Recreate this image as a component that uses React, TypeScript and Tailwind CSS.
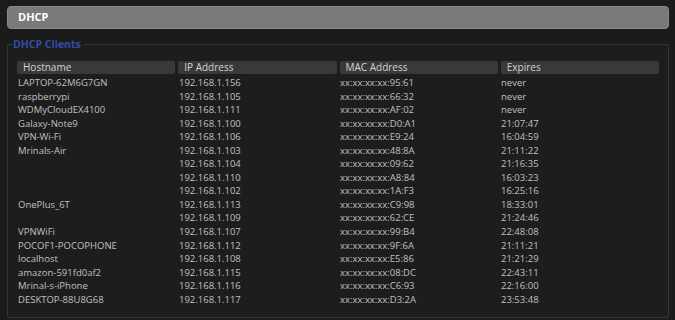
import React from "react"

const clientes = [
    { host: "LAPTOP-62M6G7GN", ip: "192.168.1.156", mac: "xx:xx:xx:xx:95:61", exp: "never" },
    { host: "raspberrypi", ip: "192.168.1.105", mac: "xx:xx:xx:xx:66:32", exp: "never" },
    { host: "WDMyCloudEX4100", ip: "192.168.1.111", mac: "xx:xx:xx:xx:AF:02", exp: "never" },
    { host: "Galaxy-Note9", ip: "192.168.1.100", mac: "xx:xx:xx:xx:D0:A1", exp: "21:07:47" },
    { host: "VPN-Wi-Fi", ip: "192.168.1.106", mac: "xx:xx:xx:xx:E9:24", exp: "16:04:59" },
    { host: "Mrinals-Air", ip: "192.168.1.103", mac: "xx:xx:xx:xx:48:8A", exp: "21:11:22" },
    { host: "", ip: "192.168.1.104", mac: "xx:xx:xx:xx:09:62", exp: "21:16:35" },
    { host: "", ip: "192.168.1.110", mac: "xx:xx:xx:xx:A8:84", exp: "16:03:23" },
    { host: "", ip: "192.168.1.102", mac: "xx:xx:xx:xx:1A:F3", exp: "16:25:16" },
    { host: "OnePlus_6T", ip: "192.168.1.113", mac: "xx:xx:xx:xx:C9:98", exp: "18:33:01" },
    { host: "", ip: "192.168.1.109", mac: "xx:xx:xx:xx:62:CE", exp: "21:24:46" },
    { host: "VPNWiFi", ip: "192.168.1.107", mac: "xx:xx:xx:xx:99:B4", exp: "22:48:08" },
    { host: "POCOF1-POCOPHONE", ip: "192.168.1.112", mac: "xx:xx:xx:xx:9F:6A", exp: "21:11:21" },
    { host: "localhost", ip: "192.168.1.108", mac: "xx:xx:xx:xx:E5:86", exp: "21:21:29" },
    { host: "amazon-591fd0af2", ip: "192.168.1.115", mac: "xx:xx:xx:xx:08:DC", exp: "22:43:11" },
    { host: "Mrinal-s-iPhone", ip: "192.168.1.116", mac: "xx:xx:xx:xx:C6:93", exp: "22:16:00" },
    { host: "DESKTOP-88U8G68", ip: "192.168.1.117", mac: "xx:xx:xx:xx:D3:2A", exp: "23:53:48" },
]

const columnas = ["Hostname", "IP Address", "MAC Address", "Expires"]

export default function App() {
    return (
        <div className="w-[675px] h-[320px] bg-[#1b1b1b] pt-[6px] px-[7px] overflow-hidden font-['Open_Sans','Liberation_Sans',sans-serif] text-[9.5px] text-[#c0c0c0]">
            {/* barra titulo */}
            <div className="h-[23px] w-[662px] rounded-[4px] bg-[#7a7a7a] border border-[#8a8a8a] flex items-center pl-[10px]">
                <span className="text-white font-bold text-[11px]">DHCP</span>
            </div>

            <fieldset className="mt-[9px] w-[662px] h-[280px] border border-[#363636] bg-[#1d1d1d] px-[9px] rounded-[2px]">
                <legend className="ml-[-4px] pr-[3px] text-[#2f4ea8] font-bold text-[10.5px] leading-[12px]">DHCP Clients</legend>

                <div className="grid grid-cols-4 gap-x-[3px] mt-[11px] w-[642px]">
                    {columnas.map((col) => (
                        <div key={col} className="h-[13px] bg-[#393939] rounded-[2px] pl-[6px] leading-[13px] text-[10px] text-[#d4d4d4]">
                            {col}
                        </div>
                    ))}
                </div>

                <div className="mt-[2px] w-[642px]">
                    {clientes.map((c, i) => (
                        <div key={i} className="grid grid-cols-4 gap-x-[3px] h-[13.56px] leading-[13.56px] pl-[1px]">
                            <span>{c.host}</span>
                            <span>{c.ip}</span>
                            <span>{c.mac}</span>
                            <span>{c.exp}</span>
                        </div>
                    ))}
                </div>
            </fieldset>
        </div>
    )
}
